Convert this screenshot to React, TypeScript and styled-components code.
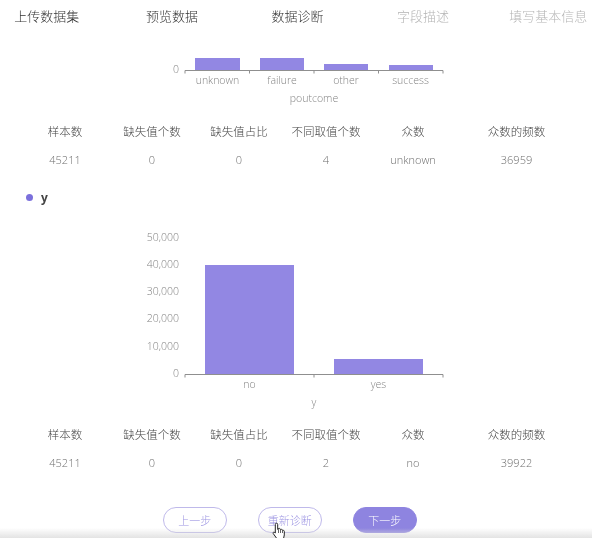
import React from "react";
import styled, { createGlobalStyle } from "styled-components";

const Global = createGlobalStyle`
  html, body { margin: 0; padding: 0; background: #fff; }
  body { font-family: "Noto Sans CJK SC", "Open Sans", sans-serif; }
`;

const Page = styled.div`
  position: relative;
  width: 592px;
  height: 538px;
  overflow: hidden;
  background: #fff;
`;

const Nav = styled.div`
  display: grid;
  grid-template-columns: repeat(5, 1fr);
  margin: 0 -19px 0 -16px;
  height: 30px;
  align-items: center;
  will-change: transform;
`;

const Step = styled.div<{ $done: boolean }>`
  text-align: center;
  font-size: 13px;
  font-weight: 300;
  color: ${(p) => (p.$done ? "#333" : "#b4b4b4")};
`;

const ChartSvg = styled.svg`
  display: block;
  width: 592px;
  will-change: transform;
`;

const AxisText = styled.text`
  font-family: "Open Sans", "Noto Sans CJK SC", sans-serif;
  font-size: 10.5px;
  font-weight: 300;
  fill: #848484;
`;

const Stats = styled.div`
  display: grid;
  grid-template-columns: repeat(5, 87px) 120px;
  grid-auto-rows: 29px;
  padding-left: 21.5px;
  align-items: center;
  text-align: center;
  will-change: transform;
`;

const Head = styled.div`
  font-size: 11.5px;
  font-weight: 300;
  color: #444;
`;

const Cell = styled.div`
  font-family: "Open Sans", "Noto Sans CJK SC", sans-serif;
  font-size: 11px;
  font-weight: 300;
  color: #6f6f6f;
`;

const Field = styled.div`
  display: flex;
  align-items: center;
  gap: 8px;
  height: 16px;
  padding-left: 26px;
  margin-top: 15px;
  font-family: "Open Sans", sans-serif;
  font-size: 12px;
  font-weight: 700;
  color: #444;
  will-change: transform;
`;

const Dot = styled.span`
  width: 7px;
  height: 7px;
  border-radius: 50%;
  background: #7b70dc;
`;

const Actions = styled.div`
  display: flex;
  height: 26px;
  margin-top: 30px;
  padding-left: 163px;
  gap: 31.5px;
  will-change: transform;
`;

const Btn = styled.div<{ $primary?: boolean }>`
  box-sizing: border-box;
  width: 63.5px;
  height: 26px;
  display: flex;
  align-items: center;
  justify-content: center;
  border-radius: 13px;
  font-size: 11px;
  font-weight: 300;
  border: 1px solid ${(p) => (p.$primary ? "#8e84e0" : "#bfb9ea")};
  background: ${(p) => (p.$primary ? "#8e84e0" : "#fff")};
  color: ${(p) => (p.$primary ? "#fff" : "#9d95e2")};
`;

const BottomShade = styled.div`
  position: absolute;
  left: 0;
  right: 0;
  bottom: 0;
  height: 10px;
  background: linear-gradient(to bottom, rgba(225, 225, 225, 0), rgba(222, 222, 222, 0.85));
  pointer-events: none;
`;

const Cursor = styled.svg`
  position: absolute;
  left: 272px;
  top: 522px;
  width: 14px;
  height: 18px;
`;

const BAR = "#9287e3";
const AXIS = "#8f8f8f";

const Bar = ({ x, y, w, base }: { x: number; y: number; w: number; base: number }) => (
  <rect x={x} y={y} width={w} height={base - y} fill={BAR} />
);

const Axis = ({ y, ticks }: { y: number; ticks: number[] }) => (
  <g stroke={AXIS} strokeWidth="1">
    <line x1={ticks[0]} x2={ticks[ticks.length - 1]} y1={y} y2={y} />
    {ticks.map((t) => (
      <line key={t} x1={t} x2={t} y1={y} y2={y + 3} />
    ))}
  </g>
);

const stats = ["样本数", "缺失值个数", "缺失值占比", "不同取值个数", "众数", "众数的频数"];

const StatsTable = ({ values }: { values: string[] }) => (
  <Stats>
    {stats.map((s) => (
      <Head key={s}>{s}</Head>
    ))}
    {values.map((v, i) => (
      <Cell key={i}>{v}</Cell>
    ))}
  </Stats>
);

export default function App() {
  return (
    <Page>
      <Global />
      <Nav>
        <Step $done>上传数据集</Step>
        <Step $done>预览数据</Step>
        <Step $done>数据诊断</Step>
        <Step $done={false}>字段描述</Step>
        <Step $done={false}>填写基本信息</Step>
      </Nav>

      <ChartSvg height={86} viewBox="0 30 592 86">
        <Bar x={195} y={58} w={45} base={71} />
        <Bar x={260} y={58} w={44} base={71} />
        <Bar x={324} y={64} w={44} base={71} />
        <Bar x={389} y={65} w={44} base={71} />
        <Axis y={70.5} ticks={[185, 249.5, 314, 378.5, 443]} />
        <AxisText x={179} y={73} textAnchor="end">0</AxisText>
        <AxisText x={217.5} y={84} textAnchor="middle">unknown</AxisText>
        <AxisText x={282} y={84} textAnchor="middle">failure</AxisText>
        <AxisText x={346} y={84} textAnchor="middle">other</AxisText>
        <AxisText x={410.5} y={84} textAnchor="middle">success</AxisText>
        <AxisText x={314} y={102} textAnchor="middle">poutcome</AxisText>
      </ChartSvg>

      <StatsTable values={["45211", "0", "0", "4", "unknown", "36959"]} />

      <Field>
        <Dot />y
      </Field>

      <ChartSvg height={214} viewBox="0 205 592 214">
        {[["50,000", 241], ["40,000", 268], ["30,000", 295], ["20,000", 322], ["10,000", 350], ["0", 377]].map(([t, y]) => (
          <AxisText key={t} x={179} y={y} textAnchor="end">{t}</AxisText>
        ))}
        <Bar x={205} y={265} w={89} base={374} />
        <Bar x={334} y={359} w={89} base={374} />
        <Axis y={374.5} ticks={[185, 314, 443]} />
        <AxisText x={249.5} y={388} textAnchor="middle">no</AxisText>
        <AxisText x={378.5} y={388} textAnchor="middle">yes</AxisText>
        <AxisText x={314} y={406} textAnchor="middle">y</AxisText>
      </ChartSvg>

      <StatsTable values={["45211", "0", "0", "2", "no", "39922"]} />

      <Actions>
        <Btn>上一步</Btn>
        <Btn>重新诊断</Btn>
        <Btn $primary>下一步</Btn>
      </Actions>

      <BottomShade />
      <Cursor viewBox="0 0 14 18">
        <path
          d="M4.5 1.2c.8 0 1.2.6 1.2 1.3v5l.8-.2V6.500c.8-.4 1.600 0 1.600.8l.8.100c.7-.3 1.400.1 1.400.8l.7.2c.7-.2 1.300.2 1.300 1v3.500L11.500 16.800H5L1.200 11.500c-.5-.8.300-1.800 1.300-1.200l.8.8V2.500c0-.7.500-1.300 1.200-1.300z"
          fill="#fff"
          stroke="#222"
          strokeWidth="1"
          strokeLinejoin="round"
        />
        <path d="M6.500 8v3M8.500 8v3M10.500 8.500V11" stroke="#222" strokeWidth=".7" fill="none" />
      </Cursor>
    </Page>
  );
}
